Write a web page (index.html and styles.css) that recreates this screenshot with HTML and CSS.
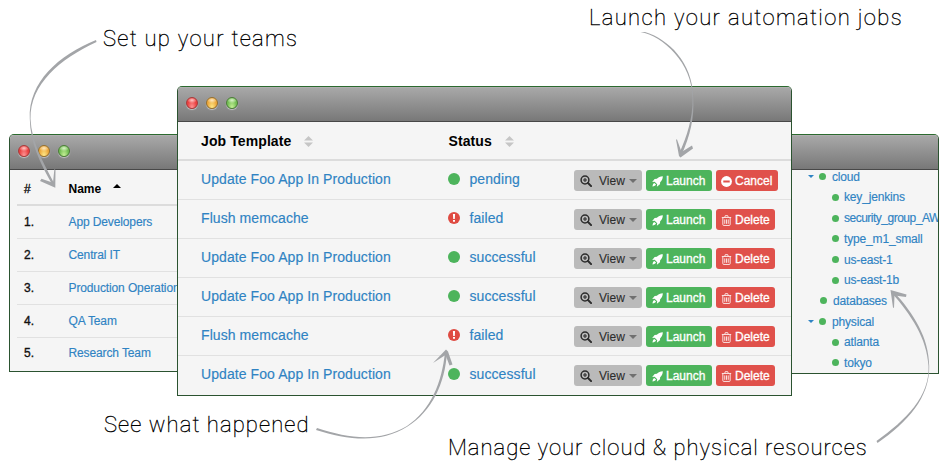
FILE: index.html
```html
<!DOCTYPE html>
<html lang="en">
<head>
<meta charset="utf-8">
<title>Automation dashboard</title>
<link rel="stylesheet" href="styles.css">
</head>
<body>
<svg class="defs" width="0" height="0">
  <symbol id="zoom" viewBox="0 0 12 12"><circle cx="5" cy="5" r="3.9" fill="none" stroke="currentColor" stroke-width="1.5"/><path d="M3 5h4M5 3v4" stroke="currentColor" stroke-width="1.1"/><path d="M8 8l3.1 3.1" stroke="currentColor" stroke-width="2" stroke-linecap="round"/></symbol>
  <symbol id="rocket" viewBox="0 0 12 12"><path fill="currentColor" d="M11.8.2C8.900.2 7 1.100 5.300 3.100L2.900 3.300.2 6.600 2.900 6.300 5.700 9.100 5.300 11.800 8.700 9.100 8.900 6.700C10.900 5 11.800 3 11.800.2zM2.500 7.500C1.200 8 .9 9.400.5 11.500 2.500 11.200 3.900 10.700 4.400 9.400z"/></symbol>
  <symbol id="minus" viewBox="0 0 12 12"><circle cx="6" cy="6" r="5.900" fill="currentColor"/><path d="M2.500 6h7" stroke="#e0514b" stroke-width="2.200"/></symbol>
  <symbol id="trash" viewBox="0 0 12 12"><path d="M.9 2.700h10.200M4.100 2.500l.6-1.800h2.600l.6 1.800M2 3v7.400q0 1 1 1h6q1 0 1-1V3M4.100 4.800v4.800M6 4.800v4.800M7.900 4.800v4.800" fill="none" stroke="currentColor" stroke-width=".9"/></symbol>
  <symbol id="ok" viewBox="0 0 12 12"><circle cx="6" cy="6" r="6" fill="#4db45c"/></symbol>
  <symbol id="bad" viewBox="0 0 12 12"><circle cx="6" cy="6" r="6" fill="#df4b42"/><path d="M4.900 2h2.200l-.3 4.900H5.200zM5 7.900h2v1.900H5z" fill="#fff"/></symbol>
  <symbol id="sort" viewBox="0 0 9 11"><path d="M4.500 0L9 4.500H0zM0 6.500h9L4.500 11z" fill="#c6c6c6"/></symbol>
</svg>

<section class="window teams">
  <div class="titlebar"><i class="light red"></i><i class="light amber"></i><i class="light green"></i></div>
  <div class="team-table">
    <div class="team head"><span>#</span><b>Name <i class="asc"></i></b></div>
    <div class="team"><span>1.</span><a>App Developers</a></div>
    <div class="team"><span>2.</span><a>Central IT</a></div>
    <div class="team"><span>3.</span><a>Production Operations</a></div>
    <div class="team"><span>4.</span><a>QA Team</a></div>
    <div class="team"><span>5.</span><a>Research Team</a></div>
  </div>
</section>

<section class="window resources">
  <div class="titlebar"></div>
  <ul class="tree">
    <li class="open">cloud</li>
    <li class="child">key_jenkins</li>
    <li class="child long">security_group_AW</li>
    <li class="child">type_m1_small</li>
    <li class="child">us-east-1</li>
    <li class="child">us-east-1b</li>
    <li>databases</li>
    <li class="open">physical</li>
    <li class="child">atlanta</li>
    <li class="child">tokyo</li>
  </ul>
</section>

<section class="window jobs">
  <div class="titlebar"><i class="light red"></i><i class="light amber"></i><i class="light green"></i></div>
  <div class="job head"><b>Job Template <svg class="sort"><use href="#sort"/></svg></b><b>Status <svg class="sort"><use href="#sort"/></svg></b></div>
  <div id="rows"></div>
</section>

<p class="note n1">Set up your teams</p>
<p class="note n2">Launch your automation jobs</p>
<p class="note n3">See what happened</p>
<p class="note n4">Manage your cloud &amp; physical resources</p>

<svg class="arrows" viewBox="0 0 948 472">
  <path d="M96 40C59 55 28 82 29.800 119C30 142 40 163 52.500 185L54.500 184C43 162 31.500 142 30.500 119C30 84 60 59 96.500 42z"/>
  <path d="M40 181L41.500 178.800 53 182.700 54.400 169 55.500 170 55.300 187.700z"/>
  <path d="M640.500 32C663 36 692.500 63 692.500 98C693 118 687 136 679 154L681.500 155C690 136 694.500 118 693.200 98C693 62 668 39 645 32z"/>
  <path d="M676 139.500L677 139.500 681.500 152 692 145.500 693 148.500 680.500 157.500 679 156z"/>
  <path d="M317 428C350 439 380 442 407 426C431 410 442 382 445 352L447 352C445 384 432 411 407.500 426.600C380 444 348 440 316 430z"/>
  <path d="M433 363L446 349.500 448 351.500 452.500 364.500 449.500 365.500 445.500 355z"/>
  <path d="M876.500 441C906 420 930 396 928.500 366C927 338 911 315 892 293L894 292C914 314 929 338 929.200 366C930 397 908 422 877.500 443z"/>
  <path d="M890.500 290L906.500 294.500 906 297 894.500 295.500 894 308 893 307.500z"/>
</svg>
<script src="jobs.js"></script>
</body>
</html>
```
FILE: styles.css
```css
* { box-sizing: border-box; }
body { margin: 0; width: 948px; height: 472px; position: relative; overflow: hidden; background: #fff; font-family: "Liberation Sans", Arial, sans-serif; }
.defs { position: absolute; }

.window { position: absolute; background: #f5f5f5; border: 1px solid #2b5330; border-top-color: #2c6a2f; border-radius: 5px 5px 0 0; overflow: hidden; }
.teams { left: 9px; top: 134px; width: 180px; height: 238px; }
.resources { left: 780px; top: 134px; width: 159px; height: 240px; }
.jobs { left: 177px; top: 86px; width: 615px; height: 310px; }

.titlebar { height: 35px; display: flex; gap: 8px; padding: 10px 0 0 8px; background: linear-gradient(#a9a9a9, #787878); border-bottom: 1px solid #484848; box-shadow: inset 0 1px #b0b0b0; }
.light { width: 12px; height: 12px; border-radius: 50%; border: 1px solid; box-shadow: 0 1px 1px #c5c5c5; }
.red { border-color: #a83a3a; background: radial-gradient(ellipse 5px 3px at 50% 22%, #ffc9c7, transparent), radial-gradient(at 50% 100%, #ff9a9a, #ea4040 65%); }
.amber { border-color: #96702e; background: radial-gradient(ellipse 5px 3px at 50% 22%, #ffe9c2, transparent), radial-gradient(at 50% 100%, #ffec8c, #eda83c 65%); }
.green { border-color: #4b7d38; background: radial-gradient(ellipse 5px 3px at 50% 22%, #dbf3ca, transparent), radial-gradient(at 50% 100%, #caf39a, #74be54 65%); }

.team-table { padding-left: 7px; }
.team { height: 33px; display: grid; grid-template-columns: 44.500px 1fr; align-items: center; padding: 0 0 1px 7px; font-size: 12px; border-bottom: 1px solid #e1e1e1; white-space: nowrap; }
.team span { color: #111; -webkit-text-stroke: .35px; }
.team a, .tree, .job a { color: #2f83c3; }
.team a { -webkit-text-stroke: .15px; letter-spacing: -.12px; }
.team:last-child { border: 0; padding-bottom: 3px; }
.team.head { height: 36px; padding-top: 4px; border-bottom: 2px solid #dcdcdc; color: #000; }
.asc { display: inline-block; margin: 0 0 5px 8px; border: 4px solid transparent; border-top: 0; border-bottom-color: #000; }

.tree { list-style: none; margin: 0; padding: 0; font-size: 12px; margin-top: -3.600px; -webkit-text-stroke: .15px; letter-spacing: -.16px; }
.tree li { height: 20.7px; display: flex; align-items: center; padding-left: 27px; white-space: nowrap; }
.tree li::before { content: ""; flex: none; width: 7px; height: 7px; border-radius: 50%; background: #4db45c; margin: 0 6px 0 12px; }
.tree .child { padding-left: 39px; }
.tree .child::before { margin-right: 5px; }
.tree .long { letter-spacing: -.5px; }
.tree .open::after { content: ""; order: -1; margin: 0 -7px 0 0; border: 3.500px solid transparent; border-top-color: #2f83c3; border-bottom: 0; }

.job { height: 39px; display: grid; grid-template-columns: 247.500px 21px 104.500px 1fr; align-items: center; padding-left: 23px; border-bottom: 1px solid #e1e1e1; font-size: 14px; white-space: nowrap; }
.job > a { -webkit-text-stroke: .15px; padding-bottom: 2px; letter-spacing: .08px; }
.job.head { border-bottom: 2px solid #dcdcdc; color: #000; font-size: 14px; }
.job.head b { letter-spacing: .1px; }
#rows .job:last-child { border-bottom-color: #f5f5f5; }
.sort { width: 9px; height: 11px; margin-left: 9px; vertical-align: -1px; }
.mark { width: 12px; height: 12px; display: block; margin: 0 0 2px -.6px; }
.actions { display: flex; gap: 4px; padding-top: 1px; }
.btn { height: 21px; display: flex; align-items: center; border-radius: 3px; padding: 1px 0 0 6px; font-size: 12px; color: #fff; -webkit-text-stroke: .3px; }
.btn svg { width: 11px; height: 11px; flex: none; margin-right: 3px; }
.view { width: 68px; color: #2c2c2c; background: #bababa; -webkit-text-stroke: .1px; }
.view svg { width: 12px; height: 12px; margin-right: 7px; }
.view::after { content: ""; margin-left: 4px; border: 4px solid transparent; border-top-color: #707070; border-bottom: 0; }
.launch { width: 66px; background: #4db45c; }
.cancel, .delete { background: #e0514b; padding-left: 5px; }
.cancel { width: 62px; }
.delete { width: 59px; }

.note { position: absolute; margin: 0; font: 100 22px/26px Roboto, sans-serif; color: #000; white-space: nowrap; letter-spacing: 1.3px; -webkit-text-stroke: .35px; }
.n1 { left: 103px; top: 26px; }
.n2 { left: 589px; top: 5px; letter-spacing: 1.36px; }
.n3 { left: 104px; top: 412px; letter-spacing: 1.1px; }
.n4 { left: 448px; top: 435px; letter-spacing: 1px; }
.arrows { position: absolute; left: 0; top: 0; width: 948px; height: 472px; fill: #a3a5a8; }
```
FILE: jobs.js
```js
const jobs = [
  ["Update Foo App In Production", "pending"],
  ["Flush memcache", "failed"],
  ["Update Foo App In Production", "successful"],
  ["Update Foo App In Production", "successful"],
  ["Flush memcache", "failed"],
  ["Update Foo App In Production", "successful"],
];
document.getElementById("rows").innerHTML = jobs.map(([name, status]) => {
  const last = status === "pending" ? ["cancel", "minus", "Cancel"] : ["delete", "trash", "Delete"];
  return `<div class="job"><a>${name}</a>
    <svg class="mark"><use href="#${status === "failed" ? "bad" : "ok"}"/></svg><a>${status}</a>
    <div class="actions"><span class="btn view"><svg><use href="#zoom"/></svg>View</span>
    <span class="btn launch"><svg><use href="#rocket"/></svg>Launch</span>
    <span class="btn ${last[0]}"><svg><use href="#${last[1]}"/></svg>${last[2]}</span></div></div>`;
}).join("");
```
